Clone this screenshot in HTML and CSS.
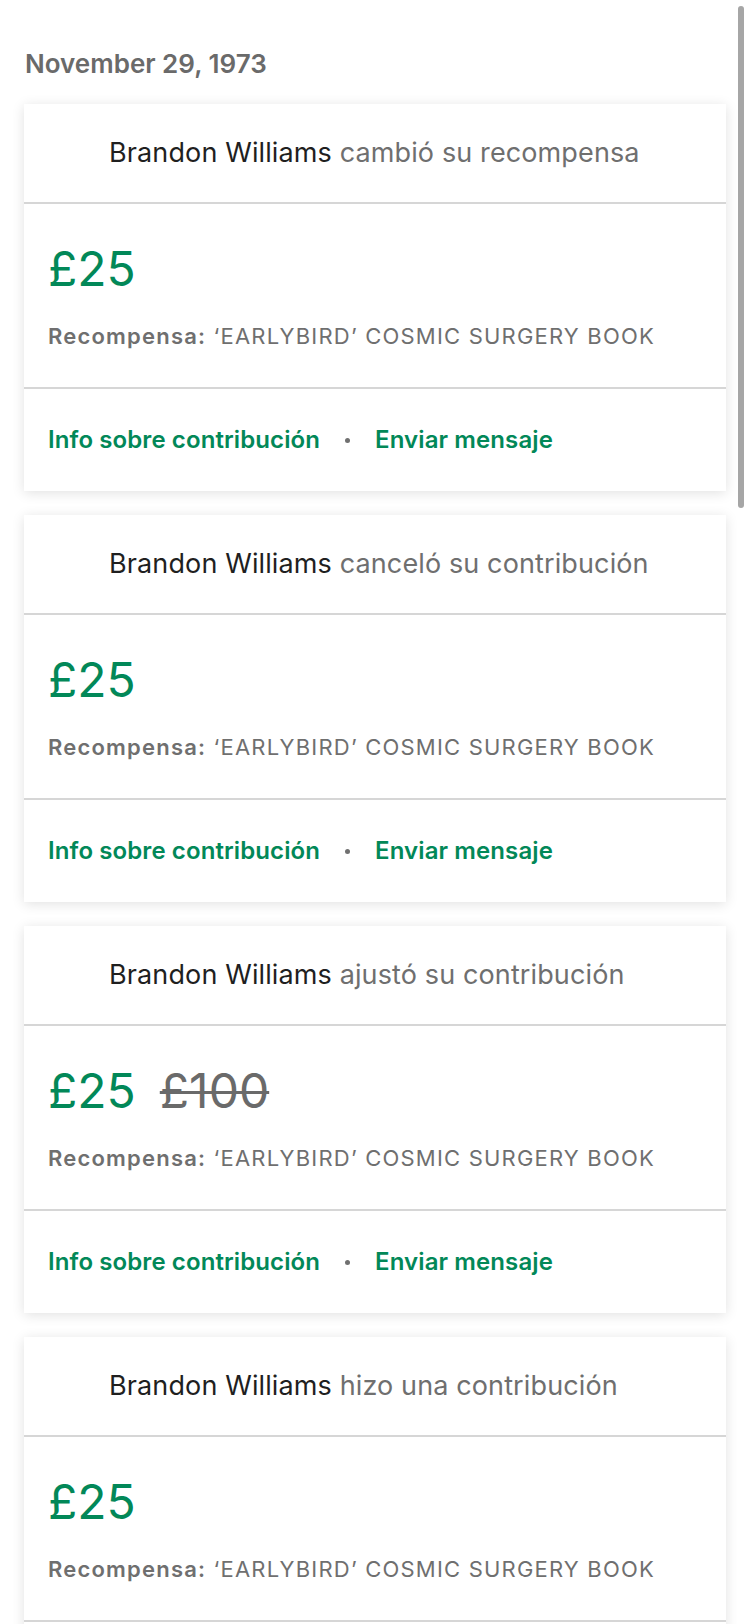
FILE: index.html
```html
<!DOCTYPE html>
<html lang="es">
<head>
<meta charset="utf-8">
<title>Actividad</title>
<link rel="stylesheet" href="styles.css">
</head>
<body>
<main class="feed">
  <h2 class="date">November 29, 1973</h2>

  <article class="card">
    <header class="card-head"><span class="name">Brandon Williams</span> cambió su recompensa</header>
    <section class="card-body">
      <div class="amounts"><span class="amount">£25</span></div>
      <p class="reward"><b>Recompensa:</b> ‘EARLYBIRD’ COSMIC SURGERY BOOK</p>
    </section>
    <footer class="card-foot">
      <a class="link">Info sobre contribución</a>
      <span class="dot"></span>
      <a class="link">Enviar mensaje</a>
    </footer>
  </article>

  <article class="card">
    <header class="card-head"><span class="name">Brandon Williams</span> canceló su contribución</header>
    <section class="card-body">
      <div class="amounts"><span class="amount">£25</span></div>
      <p class="reward"><b>Recompensa:</b> ‘EARLYBIRD’ COSMIC SURGERY BOOK</p>
    </section>
    <footer class="card-foot">
      <a class="link">Info sobre contribución</a>
      <span class="dot"></span>
      <a class="link">Enviar mensaje</a>
    </footer>
  </article>

  <article class="card">
    <header class="card-head"><span class="name">Brandon Williams</span> ajustó su contribución</header>
    <section class="card-body">
      <div class="amounts"><span class="amount">£25</span><s class="old-amount">£100</s></div>
      <p class="reward"><b>Recompensa:</b> ‘EARLYBIRD’ COSMIC SURGERY BOOK</p>
    </section>
    <footer class="card-foot">
      <a class="link">Info sobre contribución</a>
      <span class="dot"></span>
      <a class="link">Enviar mensaje</a>
    </footer>
  </article>

  <article class="card">
    <header class="card-head"><span class="name">Brandon Williams</span> hizo una contribución</header>
    <section class="card-body">
      <div class="amounts"><span class="amount">£25</span></div>
      <p class="reward"><b>Recompensa:</b> ‘EARLYBIRD’ COSMIC SURGERY BOOK</p>
    </section>
    <footer class="card-foot">
      <a class="link">Info sobre contribución</a>
      <span class="dot"></span>
      <a class="link">Enviar mensaje</a>
    </footer>
  </article>
</main>
<div class="scroll-indicator"></div>
</body>
</html>
```
FILE: styles.css
```css
html, body {
  margin: 0;
  padding: 0;
  background: #ffffff;
  overflow: hidden;
}

body {
  font-family: Inter, "Noto Sans", "Liberation Sans", sans-serif;
  color: #222222;
  -webkit-font-smoothing: antialiased;
}

.feed {
  display: flex;
  flex-direction: column;
  gap: 24px;
  padding: 48px 24px 0 24px;
}

.date {
  margin: 0;
  font-size: 26px;
  line-height: 32px;
  font-weight: 600;
  color: #6a6a6a;
  padding-left: 1px;
}

.card {
  background: #ffffff;
  box-shadow: 0 2px 12px rgba(0, 0, 0, 0.12);
  display: flex;
  flex-direction: column;
}

.card-head {
  padding: 32px 24px 32px 85px;
  font-size: 27px;
  line-height: 34px;
  letter-spacing: 0.12px;
  color: #6f6f6f;
  border-bottom: 2px solid #d6d6d6;
}

.card-head .name {
  color: #1f1f1f;
}

.card-body {
  padding: 37px 24px;
  display: flex;
  flex-direction: column;
  gap: 25px;
  border-bottom: 2px solid #d6d6d6;
}

.amounts {
  display: flex;
  align-items: baseline;
  gap: 24px;
  line-height: 56px;
  font-size: 48px;
}

.amount {
  color: #028858;
}

.old-amount {
  color: #6a6a6a;
  text-decoration-thickness: 3px;
}

.reward {
  margin: 0;
  font-size: 22px;
  line-height: 28px;
  letter-spacing: 1.2px;
  color: #6f6f6f;
}

.reward b {
  font-weight: 600;
}

.card-foot {
  padding: 35px 24px;
  display: flex;
  align-items: center;
  gap: 25px;
  font-size: 24px;
  line-height: 32px;
}

.link {
  color: #028858;
  font-weight: 600;
  letter-spacing: 0.1px;
}

.dot {
  width: 5px;
  height: 5px;
  border-radius: 50%;
  background: #707070;
}

.scroll-indicator {
  position: fixed;
  top: 6px;
  right: 6px;
  width: 6px;
  height: 502px;
  border-radius: 3px;
  background: #a6a6a6;
}
```
